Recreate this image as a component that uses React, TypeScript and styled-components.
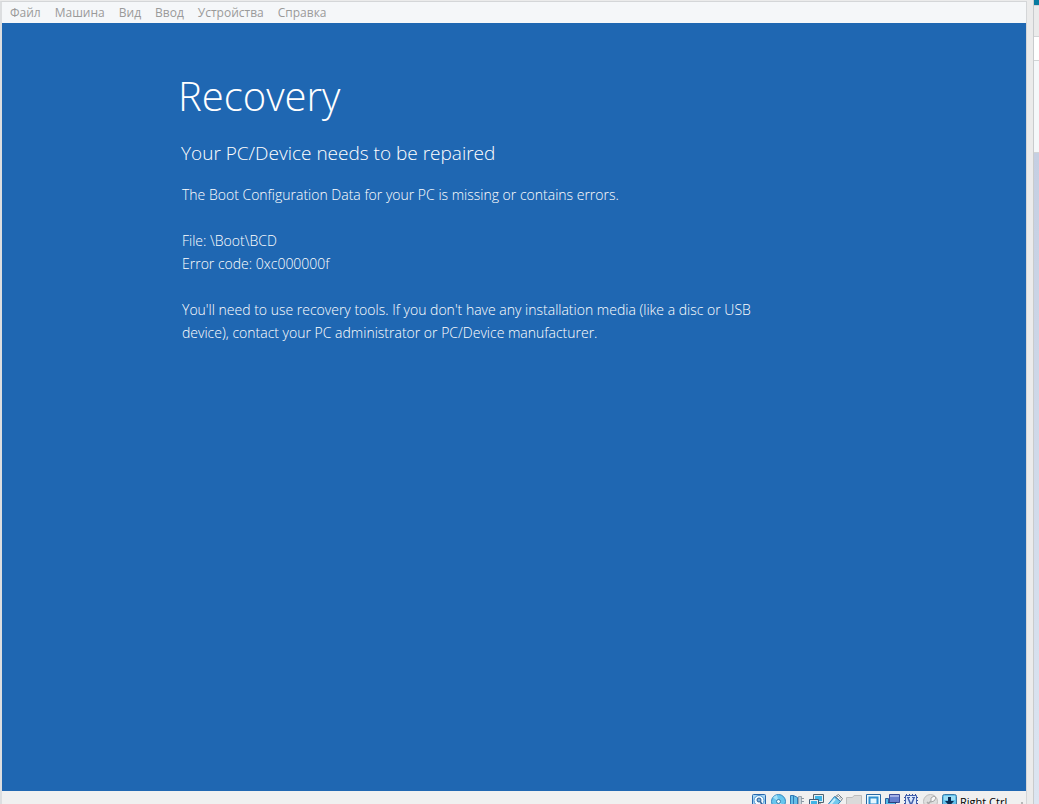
import React from "react";
import styled, { createGlobalStyle } from "styled-components";

const GlobalStyle = createGlobalStyle`
  * { box-sizing: border-box; }
  body { margin: 0; background: #ebebeb; overflow: hidden; }
`;

const Desktop = styled.div`
  display: flex;
  height: 100vh;
  overflow: hidden;
  font-family: "Open Sans", "Noto Sans", sans-serif;
`;

const VmWindow = styled.div`
  flex: 1;
  min-width: 0;
  margin-top: 1px;
  display: flex;
  flex-direction: column;
  border: 1px solid #d4d6d8;
  border-bottom: 0;
  border-left: 2px solid #dcdee0;
`;

const MenuBar = styled.nav`
  display: flex;
  flex: none;
  height: 21px;
  padding-left: 1px;
  background: #f5f7f9;
`;

const MenuItem = styled.button`
  border: 0;
  padding: 0 7px;
  background: none;
  color: #9a9a9a;
  font: 12px/21px "Open Sans", "Noto Sans", sans-serif;
`;

const Screen = styled.main`
  flex: 1;
  min-height: 0;
  padding: 47px 16px 0 176px;
  background: #1f67b2;
  color: #fff;
  font-weight: 300;
`;

const Title = styled.h1`
  margin: 0;
  font-size: 40px;
  line-height: 52px;
  font-weight: 300;
`;

const Subtitle = styled.h2`
  margin: 18px 0 17px 3px;
  font-size: 19px;
  line-height: 26px;
  font-weight: 300;
`;

const Message = styled.p`
  max-width: 600px;
  margin: 0 0 23px 4px;
  font-size: 14px;
  line-height: 23px;
`;

const StatusBar = styled.footer`
  display: flex;
  flex: none;
  gap: 3px;
  justify-content: flex-end;
  height: 13px;
  padding-top: 3px;
  overflow: hidden;
  background: #f0f0f0;
`;

const StatusButton = styled.button`
  flex: none;
  width: 16px;
  height: 16px;
  padding: 0;
  border: 0;
  background: none;
  svg { display: block; }
`;

const HostKey = styled.span`
  width: 58px;
  color: #000;
  font: 11px/16px "Open Sans", "Noto Sans", sans-serif;
  white-space: nowrap;
`;

const Grip = styled.svg`
  flex: none;
  width: 5px;
  height: 16px;
`;

const Gutter = styled.div`
  flex: none;
  width: 6px;
  background: #ebebeb;
`;

const Backdrop = styled.aside`
  flex: none;
  display: flex;
  flex-direction: column;
  width: 6px;
  border-left: 1px solid #c9cbcd;
`;

const Band = styled.div<{ $size?: number; $fill: string }>`
  flex: ${(p) => (p.$size ? "none" : 1)};
  height: ${(p) => (p.$size ? p.$size + "px" : "auto")};
  background: ${(p) => p.$fill};
  border-bottom: ${(p) => (p.$size ? "1px solid #d2d4d6" : "0")};
`;

const menus = ["Файл", "Машина", "Вид", "Ввод", "Устройства", "Справка"];

const devices: { name: string; art: React.ReactNode }[] = [
  {
    name: "Hard disks",
    art: (
      <>
        <rect x="1.5" y=".5" width="13" height="14" rx="1" fill="#a9d8f5" stroke="#2868ae" />
        <circle cx="8" cy="6.5" r="5" fill="#f2faff" stroke="#4b93d0" />
        <circle cx="8" cy="6" r="2" fill="#7fb4de" stroke="#285b96" />
        <path d="M9.500 7.500l2 5" stroke="#285b96" strokeWidth="1.500" />
      </>
    ),
  },
  {
    name: "Optical drives",
    art: (
      <>
        <circle cx="8.500" cy="7.500" r="7" fill="#67c6ee" stroke="#3287c0" />
        <path d="M8.500 7.500L3 3.500a7 7 0 0 1 4-2.500zM8.500 7.500l5.500 4a7 7 0 0 1-4 2.500z" fill="#a5e2f8" />
        <circle cx="8.500" cy="7.500" r="2" fill="#e8f9ff" stroke="#347fae" />
      </>
    ),
  },
  {
    name: "Audio",
    art: (
      <>
        <path d="M1.500 1.500h3l4 2v11l-4-2h-3z" fill="#65bfe9" stroke="#3179b5" />
        <path d="M4.500 1.500v11" stroke="#3179b5" />
        <path d="M9.500 2.500h3v11h-3z" fill="#c9d2da" stroke="#9aa6b0" />
        <path d="M12 4.500h3M12 7.500h3M12 10.500h3" stroke="#8d9aa5" />
      </>
    ),
  },
  {
    name: "Network",
    art: (
      <>
        <path d="M5.500.500h10v8h-10z" fill="#e5edf2" stroke="#52646f" />
        <path d="M7 2h7v5H7z" fill="#3fb4e6" />
        <path d="M1.500 5.500h9v7h-9z" fill="#e5edf2" stroke="#405d78" />
        <path d="M3 7h6v4H3z" fill="#3fb4e6" />
        <path d="M12 9v3M4 14h5" stroke="#52646f" />
      </>
    ),
  },
  {
    name: "USB",
    art: (
      <>
        <path d="M8.500 2.500l3-2 4 4-2 3z" fill="#edf0f2" stroke="#737c84" />
        <path d="M7.500 2.500l6 5-6 6.500q-5 1-6.500-3.500z" fill="#70c9ee" stroke="#3482b8" />
        <path d="M8 5l-5 6" stroke="#c4edfb" strokeWidth="2" />
        <path d="M11 2v1M13 3.500v1" stroke="#505960" />
      </>
    ),
  },
  {
    name: "Shared folders",
    art: <path d="M.500 13.500v-10h6l1.500-2h7.500v12z" fill="#dadada" stroke="#bdbdbd" />,
  },
  {
    name: "Display",
    art: (
      <>
        <path d="M1.500.500h14v13h-14z" fill="#eaf9ff" stroke="#2868a5" />
        <path d="M4.500 3.500h8v7h-8z" fill="#e4f7ff" stroke="#2f8fd0" strokeWidth="2" />
      </>
    ),
  },
  {
    name: "Recording",
    art: (
      <>
        <path d="M5.500.500h10v8h-10z" fill="#687fce" stroke="#3d4d9b" />
        <path d="M6 1h9v2H6z" fill="#a3b0e6" />
        <path d="M1.500 4.500h3v4h7v5h-10z" fill="#55bce9" stroke="#305e98" />
        <path d="M4 8.500h9" stroke="#26427e" />
      </>
    ),
  },
  {
    name: "Processor",
    art: (
      <>
        <path d="M3.500 0v15M6.500 0v15M9.500 0v15M12.500 0v15M1 3.500h14M1 6.500h14M1 9.500h14M1 12.500h14" stroke="#354f9b" />
        <path d="M2.500 1.500h11v12h-11z" fill="#dce8fb" stroke="#425fac" />
        <path d="M5 4l3 7 3-7" fill="none" stroke="#425fac" strokeWidth="1.500" />
        <path d="M4 3.500h3M9 3.500h3" stroke="#425fac" />
      </>
    ),
  },
  {
    name: "Mouse integration",
    art: (
      <>
        <circle cx="8.500" cy="7.500" r="7" fill="#dedede" stroke="#bcbcbc" />
        <path d="M9 4l3-2 2 2-2 3-3 1z" fill="#f8f8f8" stroke="#a6a6a6" />
        <path d="M9 7l-6 6M5 8l3 3" stroke="#aaa" strokeWidth="1.500" />
      </>
    ),
  },
  {
    name: "Keyboard capture",
    art: (
      <>
        <rect x="1.500" y=".500" width="14" height="14" rx="2" fill="#63c1eb" stroke="#397ba7" />
        <path d="M3 2h11v4H3z" fill="#9addf5" />
        <path d="M7 3h3v4h3l-4.500 5L4 7h3z" fill="#082d55" />
      </>
    ),
  },
];

export default function App() {
  return (
    <>
      <GlobalStyle />
      <Desktop>
        <VmWindow>
          <MenuBar>
            {menus.map((label) => (
              <MenuItem key={label}>{label}</MenuItem>
            ))}
          </MenuBar>
          <Screen>
            <Title>Recovery</Title>
            <Subtitle>Your PC/Device needs to be repaired</Subtitle>
            <Message>The Boot Configuration Data for your PC is missing or contains errors.</Message>
            <Message>
              File: \Boot\BCD
              <br />
              Error code: 0xc000000f
            </Message>
            <Message>
              You'll need to use recovery tools. If you don't have any installation media (like a disc or USB
              device), contact your PC administrator or PC/Device manufacturer.
            </Message>
          </Screen>
          <StatusBar>
            {devices.map(({ name, art }) => (
              <StatusButton key={name} aria-label={name}>
                <svg width="16" height="16" viewBox="0 0 16 16">{art}</svg>
              </StatusButton>
            ))}
            <HostKey>Right Ctrl</HostKey>
            <Grip viewBox="0 0 5 16">
              <path d="M0 8h2v2H0z" fill="#b8b8b8" />
            </Grip>
          </StatusBar>
        </VmWindow>
        <Gutter />
        <Backdrop>
          <Band $size={6} $fill="#087ba0" />
          <Band $size={31} $fill="#ebebeb" />
          <Band $size={24} $fill="#ffffff" />
          <Band $size={92} $fill="#f5f8fa" />
          <Band $fill="linear-gradient(#c5cfe2, #dce5f1)" />
        </Backdrop>
      </Desktop>
    </>
  );
}
